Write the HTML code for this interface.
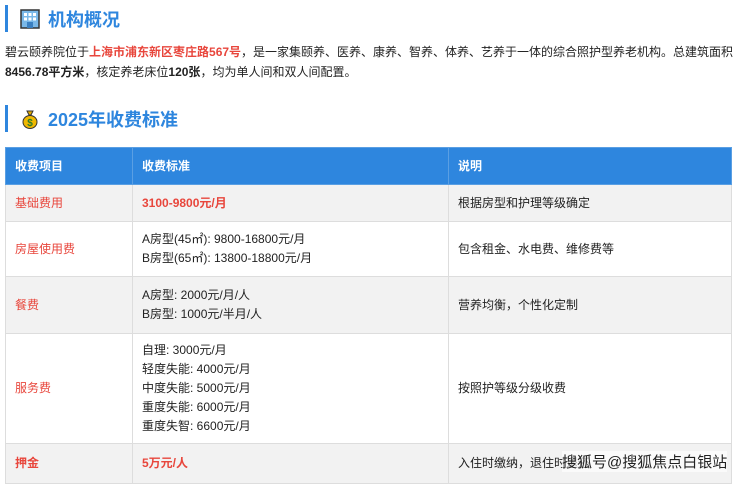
<!DOCTYPE html><html><head><meta charset="utf-8"><style>
body{margin:0;background:#fff;font-family:"Liberation Sans","Noto Sans CJK SC",sans-serif;color:#222;width:740px;height:479px;overflow:hidden;position:relative}
.h{position:absolute;left:5px;border-left:3px solid #2e86de;height:27px;display:flex;align-items:center;font-size:18px;font-weight:bold;color:#2e86de}
.ic{display:inline-block;width:20px;height:20px;margin:0 8px 0 12px}
p{position:absolute;left:5px;top:42px;margin:0;font-size:12px;line-height:20px;width:730px}
.r{color:#e8463c;font-weight:bold}
table{position:absolute;left:5px;top:147px;width:727px;border-collapse:collapse;font-size:12px}
td,th{border:1px solid #ddd;padding:0 0 0 9px;text-align:left;line-height:19px}
th{background:#2e86de;color:#fff;height:36px;border-color:#5a9fe3}
tr.g td{background:#f2f2f2}
td.k{color:#e8463c;font-weight:bold}
.wm{position:absolute;left:562px;top:451px;font-size:15px;color:#222;background:rgba(255,255,255,.6)}
</style></head><body>
<div class="h" style="top:5px"><svg class="ic" viewBox="0 0 20 20"><rect x="1" y="1" width="18" height="18" fill="#7ab8e8" stroke="#333" stroke-width="1.5"/><g fill="#fff"><rect x="4" y="4" width="3" height="3"/><rect x="8.5" y="4" width="3" height="3"/><rect x="13" y="4" width="3" height="3"/><rect x="4" y="8.5" width="3" height="3"/><rect x="8.5" y="8.5" width="3" height="3"/><rect x="13" y="8.5" width="3" height="3"/></g><rect x="7" y="13" width="6" height="6" fill="#3a7fc0"/></svg>机构概况</div>
<p>碧云颐养院位于<span class="r" style="font-weight:bold">上海市浦东新区枣庄路567号</span>，是一家集颐养、医养、康养、智养、体养、艺养于一体的综合照护型养老机构。总建筑面积<b>8456.78平方米</b>，核定养老床位<b>120张</b>，均为单人间和双人间配置。</p>
<div class="h" style="top:105px"><svg class="ic" viewBox="0 0 20 20"><path d="M7 2h6l-2 4h-2z" fill="#e0a800" stroke="#333"/><ellipse cx="10" cy="13" rx="7" ry="6.5" fill="#f0b800" stroke="#333"/><text x="10" y="17" font-size="10" text-anchor="middle" fill="#2a7a2a" font-weight="bold">$</text></svg>2025年收费标准</div>
<table>
<tr><th style="width:117px">收费项目</th><th style="width:306px">收费标准</th><th>说明</th></tr>
<tr class="g" style="height:37px"><td class="k" style="font-weight:normal">基础费用</td><td class="k">3100-9800元/月</td><td>根据房型和护理等级确定</td></tr>
<tr style="height:55px"><td class="k" style="font-weight:normal">房屋使用费</td><td>A房型(45㎡): 9800-16800元/月<br>B房型(65㎡): 13800-18800元/月</td><td>包含租金、水电费、维修费等</td></tr>
<tr class="g" style="height:57px"><td class="k" style="font-weight:normal">餐费</td><td>A房型: 2000元/月/人<br>B房型: 1000元/半月/人</td><td>营养均衡，个性化定制</td></tr>
<tr style="height:110px"><td class="k" style="font-weight:normal">服务费</td><td>自理: 3000元/月<br>轻度失能: 4000元/月<br>中度失能: 5000元/月<br>重度失能: 6000元/月<br>重度失智: 6600元/月</td><td>按照护等级分级收费</td></tr>
<tr class="g" style="height:40px"><td class="k">押金</td><td class="k">5万元/人</td><td>入住时缴纳，退住时退还</td></tr>
</table>
<div class="wm">搜狐号@搜狐焦点白银站</div>
</body></html>
